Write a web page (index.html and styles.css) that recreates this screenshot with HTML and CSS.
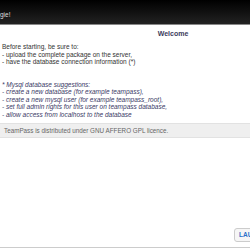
FILE: index.html
```html
<!DOCTYPE html>
<html lang="en">
<head>
    <meta charset="UTF-8">
    <meta name="viewport" content="width=device-width, initial-scale=1.0">
    <title>TeamPass installation</title>
    <link rel="stylesheet" href="styles.css">
</head>
<body>
    <div class="topbar">
        <span class="brand">gie!</span>
    </div>
    <div class="wrapper">
        <h2 class="title">Welcome</h2>
        <div class="intro">
            Before starting, be sure to:<br>
            - upload the complete package on the server,<br>
            - have the database connection information (*)<br>
            <br><br>
            <em>* Mysql database suggestions:<br>
            - create a new database (for example teampass),<br>
            - create a new mysql user (for example teampass_root),<br>
            - set full admin rights for this user on teampass database,<br>
            - allow access from localhost to the database</em>
        </div>
        <div class="licence">TeamPass is distributed under GNU AFFERO GPL licence.</div>
        <div class="actions">
            <button class="button">LAUNCH</button>
        </div>
    </div>
</body>
</html>
```

FILE: styles.css
```css
body {
    font-family: "Liberation Sans", Arial, sans-serif;
    font-size: 6.5px;
    margin: 0;
    width: 250px;
    height: 250px;
    overflow: hidden;
    background: #fff;
    color: #333;
}
.topbar {
    height: 25px;
    background: linear-gradient(#000, #222);
    border-bottom: 1px solid #888;
    display: flex;
    align-items: center;
    padding-top: 5px;
    box-sizing: border-box;
}
.brand {
    color: #ddd;
    font-size: 6.5px;
}
.wrapper {
    width: 346px;
    height: 222px;
    border-bottom: 1px solid #ccc;
    display: flex;
    flex-direction: column;
}
.title {
    margin: 4px 0 0;
    text-align: center;
    font-size: 7px;
    line-height: 10px;
    color: #3b3b5c;
}
.intro {
    margin: 4px 0 0 2px;
    line-height: 7.5px;
    color: #333;
}
.intro em {
    color: #3a3a66;
}
.licence {
    margin-top: 5px;
    padding: 3px 4px;
    line-height: 7px;
    background: #efefef;
    border-top: 1px solid #e2e2e2;
    border-bottom: 1px solid #e2e2e2;
    color: #666;
    font-size: 6.3px;
}
.actions {
    margin-top: auto;
    padding: 0 0 5px 234px;
}
.button {
    font-family: "Liberation Sans", Arial, sans-serif;
    font-size: 6.5px;
    font-weight: bold;
    color: #2a6fc9;
    background: #f6f6f6;
    border: 1px solid #ccc;
    border-radius: 3px;
    padding: 3px 4px;
    line-height: 6px;
}
```
